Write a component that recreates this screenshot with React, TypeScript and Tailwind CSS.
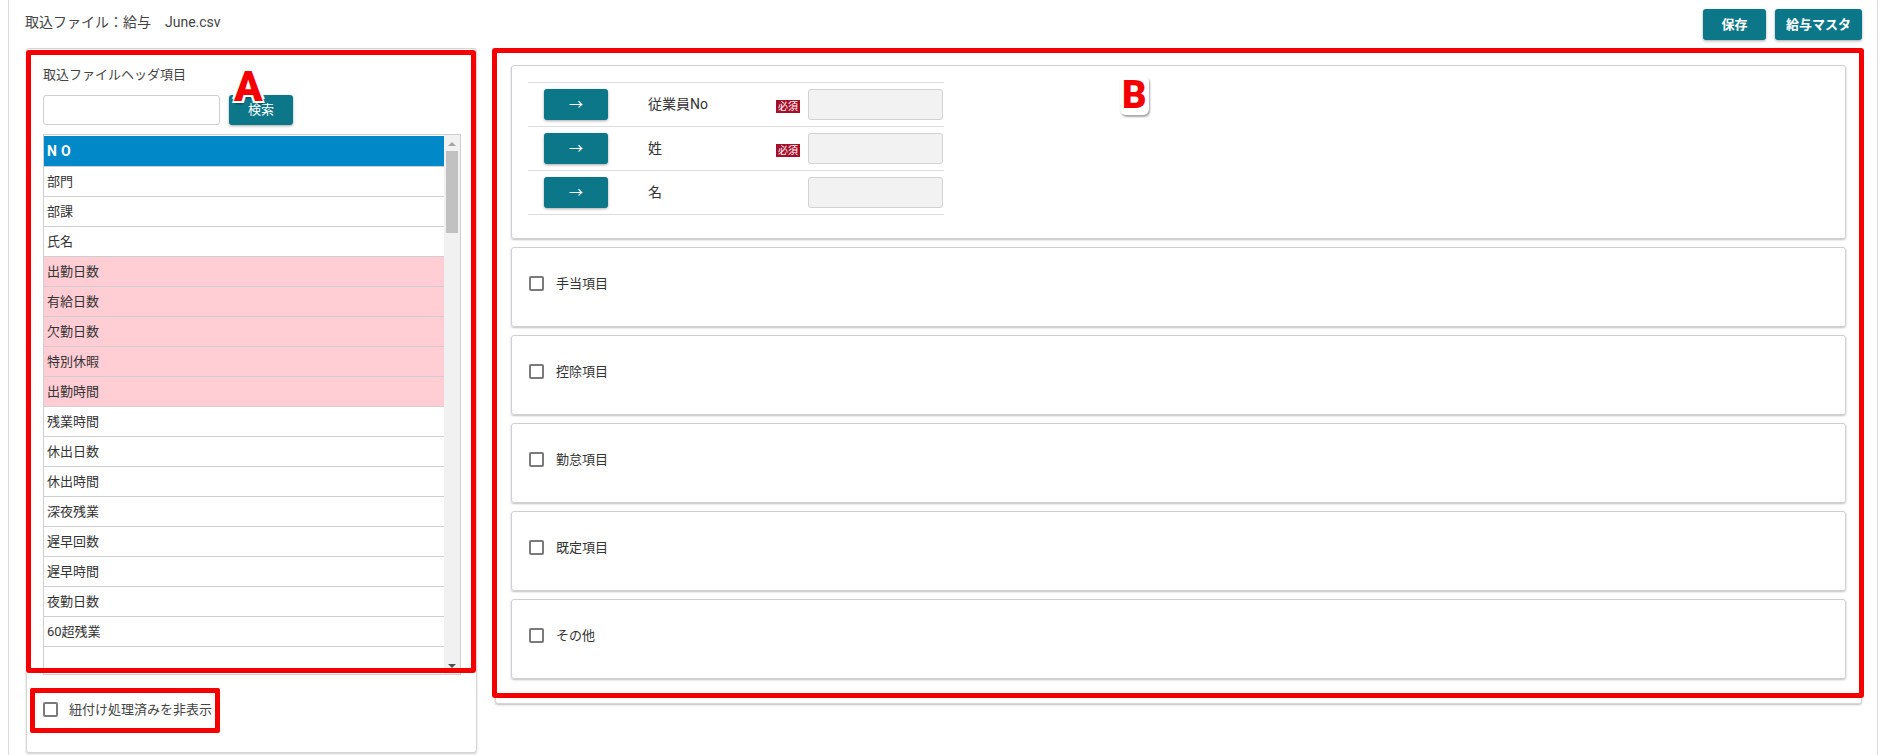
import { useState } from "react";

const headerItems = [
  { name: "部門", pink: false },
  { name: "部課", pink: false },
  { name: "氏名", pink: false },
  { name: "出勤日数", pink: true },
  { name: "有給日数", pink: true },
  { name: "欠勤日数", pink: true },
  { name: "特別休暇", pink: true },
  { name: "出勤時間", pink: true },
  { name: "残業時間", pink: false },
  { name: "休出日数", pink: false },
  { name: "休出時間", pink: false },
  { name: "深夜残業", pink: false },
  { name: "遅早回数", pink: false },
  { name: "遅早時間", pink: false },
  { name: "夜勤日数", pink: false },
  { name: "60超残業", pink: false },
];

const mappingRows = [
  { label: "従業員No", required: true },
  { label: "姓", required: true },
  { label: "名", required: false },
];

const groups = ["手当項目", "控除項目", "勤怠項目", "既定項目", "その他"];

function Checkbox({ checked, onChange }: { checked: boolean; onChange: () => void }) {
  return (
    <button
      onClick={onChange}
      className="flex h-[15px] w-[15px] shrink-0 items-center justify-center rounded-[2px] border-2 border-[#7a7a7a] bg-white"
    >
      {checked && <span className="block h-[7px] w-[7px] bg-[#7a7a7a]" />}
    </button>
  );
}

export default function App() {
  const [search, setSearch] = useState("");
  const [hideDone, setHideDone] = useState(false);
  const [open, setOpen] = useState<Record<string, boolean>>({});

  return (
    <div className="h-[755px] w-full overflow-hidden bg-white font-['Roboto','Noto_Sans_CJK_JP',sans-serif] text-[#333]">
      <div className="ml-[8px] mr-[3px] h-full border-x border-[#dcdcdc]">
        {/* Header */}
        <div className="flex h-[48px] items-start justify-between pl-[16px] pr-[15px]">
          <p className="pt-[12px] text-[14px] leading-[20px] text-[#444]">取込ファイル：給与　June.csv</p>
          <div className="flex gap-[9px] pt-[9px]">
            <button className="h-[31px] w-[63px] rounded-[3px] bg-[#0b7788] text-[13px] font-bold text-white shadow-[0_1px_3px_rgba(0,0,0,0.35)]">
              保存
            </button>
            <button className="h-[31px] w-[87px] rounded-[3px] bg-[#0b7788] text-[13px] font-bold text-white shadow-[0_1px_3px_rgba(0,0,0,0.35)]">
              給与マスタ
            </button>
          </div>
        </div>

        <div className="flex items-start gap-[18px] pl-[17px]">
          {/* Left panel */}
          <div className="relative h-[705px] w-[451px] rounded-[3px] border border-[#d6d6d6] bg-white shadow-[0_1px_2px_rgba(0,0,0,0.2)]">
            <div className="pl-[16px] pt-[17px]">
              <p className="text-[13px] leading-[18px] text-[#444]">取込ファイルヘッダ項目</p>
              <div className="mt-[11px] flex gap-[9px]">
                <input
                  value={search}
                  onChange={(e) => setSearch(e.target.value)}
                  className="h-[30px] w-[177px] rounded-[3px] border border-[#cfcfcf] px-2 text-[13px] outline-none"
                />
                <button className="h-[30px] w-[64px] rounded-[3px] bg-[#0b7788] text-[13px] text-white shadow-[0_1px_3px_rgba(0,0,0,0.35)]">
                  検索
                </button>
              </div>

              {/* List */}
              <div className="mt-[9px] flex h-[541px] w-[418px] border border-[#cfcfcf] bg-white">
                <div className="flex-1 overflow-hidden pt-[1px]">
                  <div className="flex h-[30px] items-center bg-[#0188c8] pl-[3px] text-[14px] font-bold tracking-[4px] text-white">
                    NO
                  </div>
                  {headerItems
                    .filter((h) => h.name.includes(search))
                    .map((h) => (
                      <div
                        key={h.name}
                        className={`flex h-[30px] items-center border-t border-[#cfcfcf] pl-[3px] text-[13px] text-[#333] ${
                          h.pink ? "bg-[#ffcdd3]" : "bg-white"
                        }`}
                      >
                        {h.name}
                      </div>
                    ))}
                  <div className="h-[30px] border-t border-[#cfcfcf]" />
                </div>
                {/* Scrollbar */}
                <div className="flex w-[16px] flex-col items-center bg-[#f1f1f1]">
                  <div className="mt-[7px] h-0 w-0 border-x-[4px] border-b-[4px] border-x-transparent border-b-[#a3a3a3]" />
                  <div className="mt-[5px] h-[82px] w-[12px] bg-[#c1c1c1]" />
                  <div className="flex-1" />
                  <div className="mb-[6px] h-0 w-0 border-x-[4px] border-t-[4px] border-x-transparent border-t-[#505050]" />
                </div>
              </div>

              <label className="mt-[25px] flex items-center gap-[11px] text-[13px] text-[#444]">
                <Checkbox checked={hideDone} onChange={() => setHideDone(!hideDone)} />
                紐付け処理済みを非表示
              </label>
            </div>

            {/* Annotations */}
            <div className="pointer-events-none absolute left-[-1px] top-[1px] h-[623px] w-[450px] rounded-[3px] border-[5px] border-[#f50000]" />
            <div className="pointer-events-none absolute left-[3px] top-[639px] h-[45px] w-[190px] rounded-[2px] border-[5px] border-[#f50000]" />
            <span className="pointer-events-none absolute left-[207px] top-[14px] text-[42px] font-black leading-[48px] text-[#f50000] [text-shadow:2px_2px_0_#fff,-2px_-2px_0_#fff,2px_-2px_0_#fff,-2px_2px_0_#fff,1px_3px_2px_rgba(0,0,0,0.4)]">
              A
            </span>
          </div>

          {/* Right panel */}
          <div className="relative h-[656px] w-[1367px] rounded-[3px] border border-[#d6d6d6] bg-white px-[15px] pt-[16px] shadow-[0_1px_2px_rgba(0,0,0,0.25)]">
            <div className="flex flex-col gap-[8px]">
              <div className="h-[174px] rounded-[3px] border border-[#d0d0d0] px-[16px] pt-[16px] shadow-[0_1px_2px_rgba(0,0,0,0.25)]">
                <div className="w-[416px] border-t border-[#dedede]">
                  {mappingRows.map((r) => (
                    <div key={r.label} className="flex h-[44px] items-center border-b border-[#dedede]">
                      <button className="ml-[16px] h-[31px] w-[64px] rounded-[3px] bg-[#0b7788] text-[14px] text-white shadow-[0_1px_3px_rgba(0,0,0,0.35)]">
                        →
                      </button>
                      <span className="ml-[40px] w-[128px] text-[14px] text-[#333]">{r.label}</span>
                      <span className="w-[32px]">
                        {r.required && (
                          <span className="inline-block bg-[#a50f2a] px-[2px] text-[10px] leading-[13px] text-white">必須</span>
                        )}
                      </span>
                      <input
                        readOnly
                        className="h-[31px] w-[135px] rounded-[3px] border border-[#d2d2d2] bg-[#f3f2f2] outline-none"
                      />
                    </div>
                  ))}
                </div>
              </div>
              {groups.map((g) => (
                <div
                  key={g}
                  className="h-[80px] rounded-[3px] border border-[#d0d0d0] px-[17px] pt-[26px] shadow-[0_1px_2px_rgba(0,0,0,0.25)]"
                >
                  <label className="flex items-center gap-[12px] text-[13px] text-[#333]">
                    <Checkbox checked={!!open[g]} onChange={() => setOpen({ ...open, [g]: !open[g] })} />
                    {g}
                  </label>
                </div>
              ))}
            </div>

            {/* Annotations */}
            <div className="pointer-events-none absolute left-[-4px] top-[-1px] h-[650px] w-[1372px] rounded-[3px] border-[5px] border-[#f50000]" />
            <span className="pointer-events-none absolute left-[624px] top-[26px] rounded-[6px] bg-white px-[2px] text-[38px] font-black leading-[40px] text-[#f50000] shadow-[1px_2px_2px_rgba(0,0,0,0.35)]">
              B
            </span>
          </div>
        </div>
      </div>
    </div>
  );
}
